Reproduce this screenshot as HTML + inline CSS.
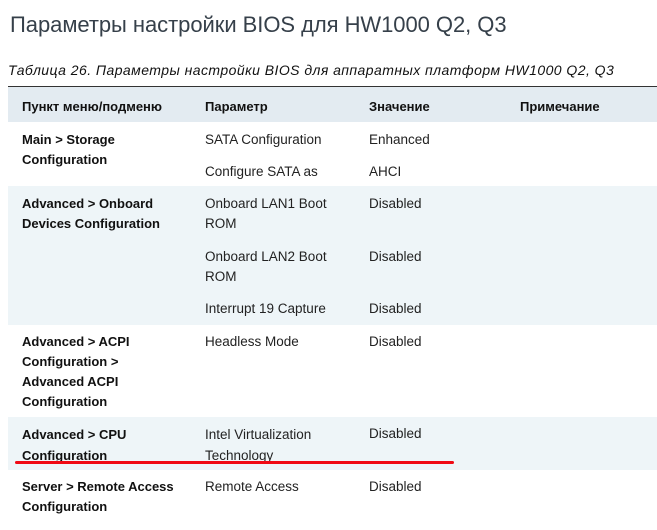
<!DOCTYPE html>
<html><head><meta charset="utf-8"><style>
body{margin:0;width:657px;height:530px;overflow:hidden;background:#fff;font-family:"Liberation Sans",sans-serif;color:#111;position:relative}
div{position:absolute;white-space:nowrap}
.t{font-size:13.5px;line-height:20px;color:#222;margin-top:1px}
.b{font-size:13px;font-weight:bold;line-height:20px;color:#111;margin-top:1px}
.bg{left:8px;width:649px}
</style></head><body>
<div style="left:10px;top:12px;font-size:22px;color:#36404a;letter-spacing:-0.05px">Параметры настройки BIOS для HW1000 Q2, Q3</div>
<div style="left:8px;top:62px;font-size:14px;font-style:italic;color:#111;letter-spacing:0.45px">Таблица 26. Параметры настройки BIOS для аппаратных платформ HW1000 Q2, Q3</div>
<div class="bg" style="top:86px;height:1px;background:#333"></div>
<div class="bg" style="top:87px;height:35px;background:#e3ebf1"></div>
<div class="bg" style="top:186px;height:139px;background:#eef5f8"></div>
<div class="bg" style="top:417px;height:53px;background:#eef5f8"></div>

<div class="b" style="left:22px;top:96px">Пункт меню/подменю</div>
<div class="b" style="left:205px;top:96px">Параметр</div>
<div class="b" style="left:369px;top:96px">Значение</div>
<div class="b" style="left:520px;top:96px">Примечание</div>

<div class="b" style="left:22px;top:129px">Main &gt; Storage<br>Configuration</div>
<div class="t" style="left:205px;top:129px">SATA Configuration</div>
<div class="t" style="left:205px;top:161px">Configure SATA as</div>
<div class="t" style="left:369px;top:129px">Enhanced</div>
<div class="t" style="left:369px;top:161px">AHCI</div>

<div class="b" style="left:22px;top:193px">Advanced &gt; Onboard<br>Devices Configuration</div>
<div class="t" style="left:205px;top:193px">Onboard LAN1 Boot<br>ROM</div>
<div class="t" style="left:205px;top:246px">Onboard LAN2 Boot<br>ROM</div>
<div class="t" style="left:205px;top:298px">Interrupt 19 Capture</div>
<div class="t" style="left:369px;top:193px">Disabled</div>
<div class="t" style="left:369px;top:246px">Disabled</div>
<div class="t" style="left:369px;top:298px">Disabled</div>

<div class="b" style="left:22px;top:331px">Advanced &gt; ACPI<br>Configuration &gt;<br>Advanced ACPI<br>Configuration</div>
<div class="t" style="left:205px;top:331px">Headless Mode</div>
<div class="t" style="left:369px;top:331px">Disabled</div>

<div class="b" style="left:22px;top:423px;line-height:21px">Advanced &gt; CPU<br>Configuration</div>
<div class="t" style="left:205px;top:423px;line-height:21px">Intel Virtualization<br>Technology</div>
<div class="t" style="left:369px;top:423px">Disabled</div>
<div style="left:15px;top:461px;width:439px;height:3px;background:#f00a14;border-radius:2px"></div>

<div class="b" style="left:22px;top:476px">Server &gt; Remote Access<br>Configuration</div>
<div class="t" style="left:205px;top:476px">Remote Access</div>
<div class="t" style="left:369px;top:476px">Disabled</div>
</body></html>
